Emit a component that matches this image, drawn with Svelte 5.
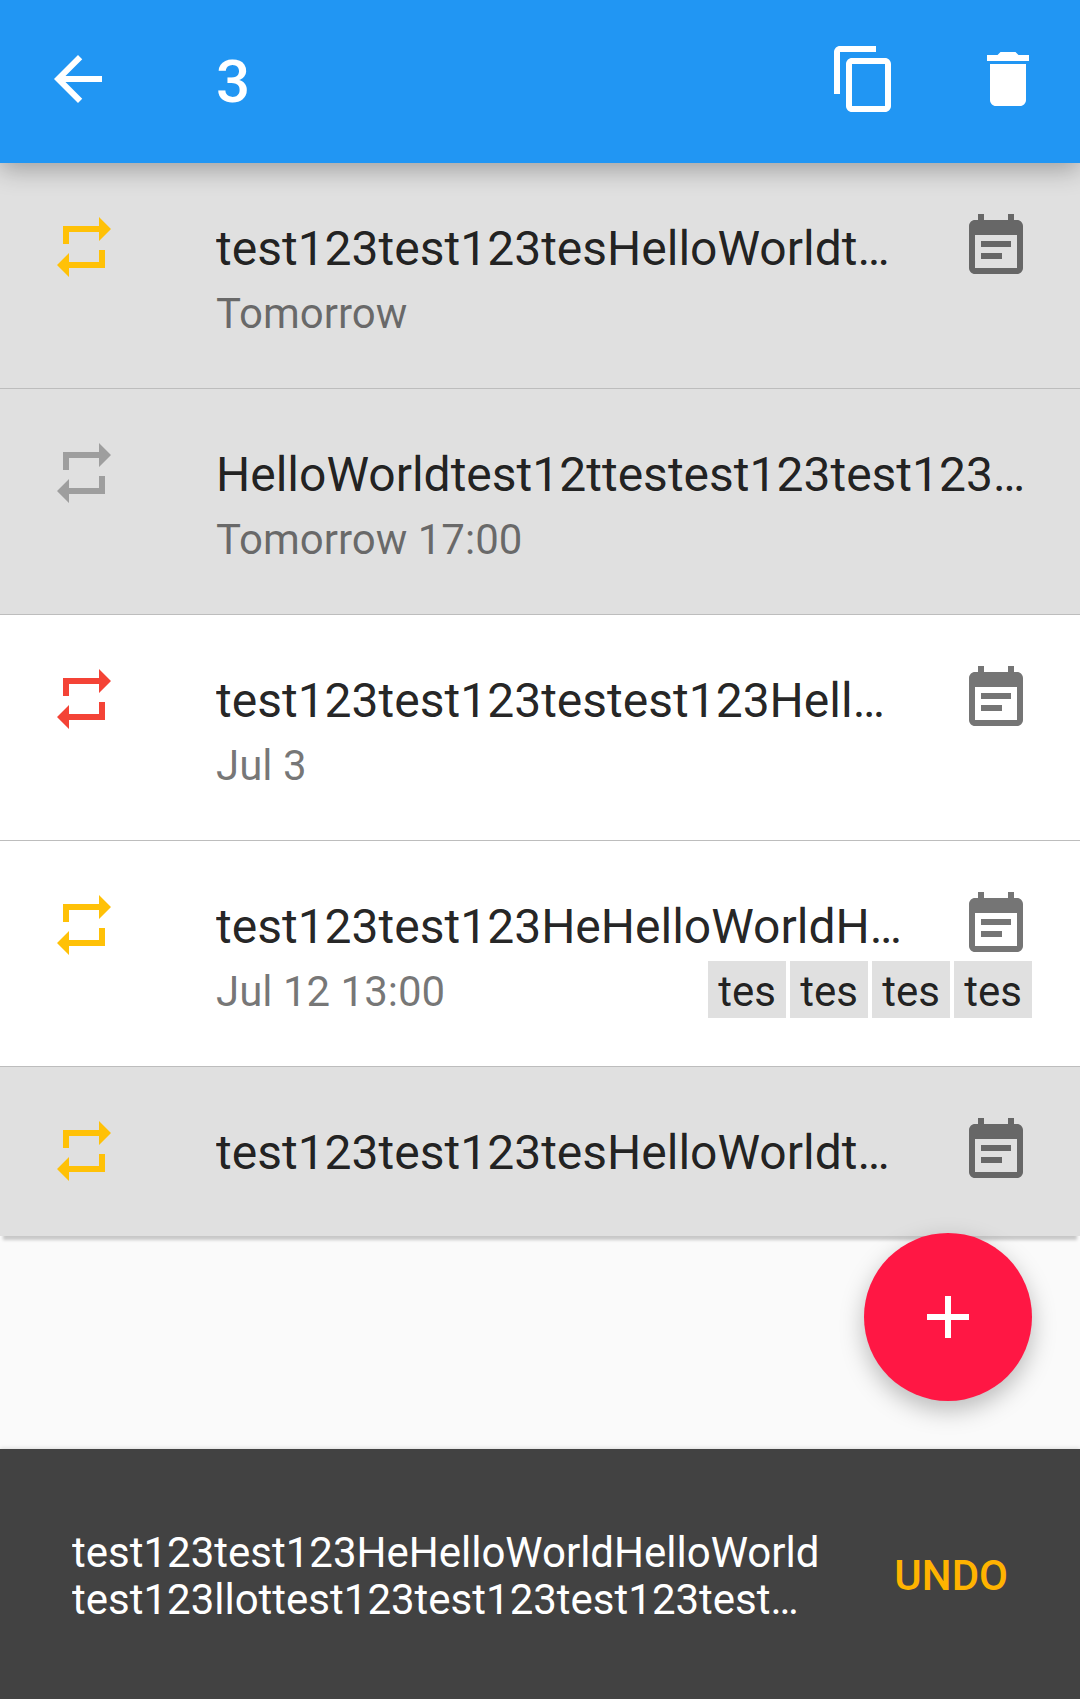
<script lang="ts">
	const REPEAT = 'M7 7h10v3l4-4-4-4v3H5v6h2V7zm10 10H7v-3l-4 4 4 4v-3h12v-6h-2v4z';
	const NOTE =
		'M17 10H7v2h10v-2zm2-7h-1V1h-2v2H8V1H6v2H5c-1.11 0-1.99.9-1.99 2L3 19c0 1.1.89 2 2 2h14c1.1 0 2-.9 2-2V5c0-1.1-.9-2-2-2zm0 16H5V8h14v11zm-5-5H7v2h7v-2z';

	const tasks = [
		{ title: 'test123test123tesHelloWorldtest123test123', due: 'Tomorrow', color: '#ffc107', selected: true, note: true, tags: [] },
		{ title: 'HelloWorldtest12ttestest123test123test123test123', due: 'Tomorrow 17:00', color: '#9e9e9e', selected: true, note: false, tags: [] },
		{ title: 'test123test123testest123HelloWorldtest123', due: 'Jul 3', color: '#f44336', selected: false, note: true, tags: [] },
		{ title: 'test123test123HeHelloWorldHelloWorldtest123', due: 'Jul 12 13:00', color: '#ffc107', selected: false, note: true, tags: ['tes', 'tes', 'tes', 'tes'] },
		{ title: 'test123test123tesHelloWorldtest123test123', due: '', color: '#ffc107', selected: true, note: true, tags: [] }
	];
</script>

<div class="screen">
	<header class="appbar">
		<svg class="icon" viewBox="0 0 24 24"><path d="M20 11H7.83l5.59-5.59L12 4l-8 8 8 8 1.41-1.41L7.83 13H20v-2z" /></svg>
		<h1 class="count">3</h1>
		<svg class="icon" viewBox="0 0 24 24"><path d="M16 1H4c-1.1 0-2 .9-2 2v14h2V3h12V1zm3 4H8c-1.1 0-2 .9-2 2v14c0 1.1.9 2 2 2h11c1.1 0 2-.9 2-2V7c0-1.1-.9-2-2-2zm0 16H8V7h11v14z" /></svg>
		<svg class="icon" viewBox="0 0 24 24"><path d="M6 19c0 1.1.9 2 2 2h8c1.1 0 2-.9 2-2V7H6v12zM19 4h-3.5l-1-1h-5l-1 1H5v2h14V4z" /></svg>
	</header>

	<main class="content">
		<ul class="list">
			{#each tasks as task}
				<li class="row" class:selected={task.selected} class:short={!task.due}>
					<svg class="icon" viewBox="0 0 24 24" style="fill: {task.color}"><path d={REPEAT} /></svg>
					<div class="body">
						<div class="line">
							<span class="title">{task.title}</span>
							{#if task.note}
								<svg class="icon note" viewBox="0 0 24 24"><path d={NOTE} /></svg>
							{/if}
						</div>
						{#if task.due}
							<div class="meta">
								<span class="due">{task.due}</span>
								{#if task.tags.length}
									<span class="tags">
										{#each task.tags as tag}
											<span class="tag">{tag}</span>
										{/each}
									</span>
								{/if}
							</div>
						{/if}
					</div>
				</li>
			{/each}
		</ul>

		<button class="fab" aria-label="Add">
			<svg class="icon" viewBox="0 0 24 24"><path d="M19 13h-6v6h-2v-6H5v-2h6V5h2v6h6v2z" /></svg>
		</button>
	</main>

	<footer class="snackbar">
		<p class="message">test123test123HeHelloWorldHelloWorld test123llottest123test123test123test123test123</p>
		<span class="undo">UNDO</span>
	</footer>
</div>

<style>
	:global(body) {
		background: #fafafa;
	}

	.screen {
		display: flex;
		flex-direction: column;
		height: 1699px;
		font-family: Roboto, 'Noto Sans', sans-serif;
		overflow: hidden;
	}

	.icon {
		display: block;
		flex: none;
		width: 72px;
		height: 72px;
	}

	.appbar {
		position: relative;
		z-index: 2;
		display: flex;
		align-items: flex-start;
		flex: none;
		gap: 72px;
		height: 163px;
		padding: 43px 36px 0 42px;
		box-sizing: border-box;
		background: #2196f3;
		box-shadow: 0 6px 24px rgba(0, 0, 0, 0.3);
		fill: #fff;
	}

	.count {
		flex: 1;
		margin: 3px 0 0 30px;
		color: #fff;
		font-size: 60px;
		font-weight: 500;
		line-height: 72px;
	}

	.content {
		position: relative;
		flex: 1;
		background: #fafafa;
	}

	.list {
		list-style: none;
		margin: 0;
		padding: 0;
		box-shadow: 0 7px 3px -3px rgba(0, 0, 0, 0.2);
	}

	.row {
		display: flex;
		gap: 96px;
		height: 226px;
		padding: 48px 48px 0;
		box-sizing: border-box;
		background: #fff;
		border-bottom: 1px solid #bdbdbd;
	}

	.row.selected {
		background: #e0e0e0;
	}

	.row.short {
		height: 169px;
		border-bottom: 0;
	}

	.body {
		flex: 1;
		min-width: 0;
	}

	.line {
		display: flex;
		height: 72px;
		line-height: 72px;
	}

	.title {
		flex: 1;
		min-width: 0;
		padding-top: 2px;
		overflow: hidden;
		white-space: nowrap;
		text-overflow: ellipsis;
		color: rgba(0, 0, 0, 0.87);
		font-size: 48px;
	}

	.note {
		margin-left: 54px;
		fill: rgba(0, 0, 0, 0.54);
	}

	.meta {
		display: flex;
		align-items: center;
		justify-content: space-between;
		height: 57px;
		font-size: 42px;
	}

	.due {
		padding-top: 4px;
		color: rgba(0, 0, 0, 0.54);
	}

	.tags {
		display: flex;
		gap: 4px;
	}

	.tag {
		width: 78px;
		height: 57px;
		background: #e0e0e0;
		color: rgba(0, 0, 0, 0.87);
		line-height: 61px;
		text-align: center;
	}

	.fab {
		position: absolute;
		top: 1070px;
		right: 48px;
		display: flex;
		align-items: center;
		justify-content: center;
		width: 168px;
		height: 168px;
		padding: 0;
		border: 0;
		border-radius: 50%;
		background: #ff1744;
		box-shadow: 0 9px 24px rgba(0, 0, 0, 0.26);
		fill: #fff;
	}

	.snackbar {
		position: relative;
		z-index: 1;
		display: flex;
		align-items: center;
		flex: none;
		height: 250px;
		padding: 0 72px;
		box-sizing: border-box;
		background: #424242;
		box-shadow: 0 -1px 4px rgba(0, 0, 0, 0.12);
		font-size: 42px;
	}

	.message {
		display: -webkit-box;
		flex: none;
		width: 748px;
		margin: 3px 0 0;
		overflow: hidden;
		-webkit-box-orient: vertical;
		-webkit-line-clamp: 2;
		color: #fff;
		line-height: 47px;
		word-break: break-word;
	}

	.undo {
		margin: 3px 0 0 auto;
		color: #ffb300;
		font-weight: 500;
	}
</style>
